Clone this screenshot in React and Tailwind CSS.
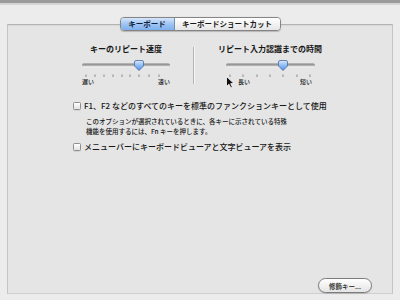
import React from "react";

function SliderGraphic({ ticks, thumbX, trackEnd }) {
  return (
    <svg width="110" height="22" viewBox="0 0 110 22" className="block">
      <defs>
        <linearGradient id="trk" x1="0" y1="0" x2="0" y2="1">
          <stop offset="0" stopColor="#7d7d7d" />
          <stop offset="1" stopColor="#c9c9c9" />
        </linearGradient>
        <linearGradient id="thm" x1="0" y1="0" x2="0" y2="1">
          <stop offset="0" stopColor="#d9e9fd" />
          <stop offset="0.5" stopColor="#8dbcf5" />
          <stop offset="1" stopColor="#4f8fe6" />
        </linearGradient>
      </defs>
      <rect x="11" y="7.5" width={trackEnd - 11} height="3" rx="1.5" fill="url(#trk)" />
      <line x1="12" y1="11" x2={trackEnd - 1} y2="11" stroke="#f4f4f4" strokeWidth="0.8" />
      {ticks.map((t) => (
        <rect key={t} x={t - 0.5} y="18.5" width="1" height="2.5" fill="#8a8a8a" />
      ))}
      <path
        d={`M${thumbX - 4.5},6 Q${thumbX - 4.5},4.5 ${thumbX - 3},4.5 L${thumbX + 3},4.5 Q${thumbX + 4.5},4.5 ${thumbX + 4.5},6 L${thumbX + 4.5},10 L${thumbX},14.5 L${thumbX - 4.5},10 Z`}
        fill="url(#thm)"
        stroke="#4b6a9c"
        strokeWidth="0.8"
      />
    </svg>
  );
}

function Checkbox() {
  return (
    <div className="w-[8px] h-[8px] shrink-0 rounded-[1.5px] border border-[#8e8e8e] bg-gradient-to-b from-[#ffffff] to-[#e2e2e2] shadow-[0_0.5px_0.5px_rgba(0,0,0,0.15)]" />
  );
}

export default function App() {
  const leftTicks = [15, 24, 33, 42, 51, 59, 68, 78, 88];
  const rightTicks = [15, 28, 42, 55, 68, 82, 95];
  return (
    <div className="w-[400px] h-[300px] bg-[#ececec] flex flex-col overflow-hidden relative font-['Noto_Sans_CJK_JP',sans-serif] text-[#161616]">
      <div className="h-[3px] bg-[#9b9b9b] shrink-0" />
      <div className="h-[2px] bg-[#d4d4d4] shrink-0" />
      <div className="mt-[19px] ml-[7px] w-[386px] h-[270px] shrink-0 box-border border border-t-[#b3b3b3] border-l-[#c4c4c4] border-r-[#c4c4c4] border-b-[#cfcfcf] bg-[#e5e5e5] flex flex-col shadow-[inset_0_1px_1px_rgba(0,0,0,0.06)]">
        {/* tabs */}
        <div className="-mt-[8px] self-center flex h-[14px] w-[161px] rounded-[4px] border border-[#858585] overflow-hidden shadow-[0_0.5px_1px_rgba(0,0,0,0.2)] text-[7.5px] font-bold leading-[12px]">
          <div className="w-[54px] flex items-center justify-center bg-gradient-to-b from-[#d6e6fb] via-[#9fc4f3] to-[#7fb0ee] border-r border-[#6f8fb8] text-[#0f1f3a]">
            キーボード
          </div>
          <div className="flex-1 flex items-center justify-center bg-gradient-to-b from-[#ffffff] to-[#e6e6e6] text-[#1a1a1a]">
            キーボードショートカット
          </div>
        </div>

        {/* sliders */}
        <div className="mt-[13px] flex items-start">
          <div className="ml-[63px] w-[110px] flex flex-col">
            <div className="text-center text-[8px] leading-[10px] font-bold">キーのリピート速度</div>
            <div className="mt-[2px]">
              <SliderGraphic ticks={leftTicks} thumbX={68} trackEnd={99} />
            </div>
            <div className="flex justify-between px-[11px] text-[6px] leading-[7px] font-medium">
              <span>遅い</span>
              <span>速い</span>
            </div>
          </div>
          <div className="ml-[12px] mt-[3px] h-[37px] w-[2px] flex">
            <div className="w-[1px] bg-[#b4b4b4]" />
            <div className="w-[1px] bg-[#f7f7f7]" />
          </div>
          <div className="ml-[20px] w-[110px] flex flex-col">
            <div className="text-center text-[8px] leading-[10px] font-bold whitespace-nowrap">リピート入力認識までの時間</div>
            <div className="mt-[2px]">
              <SliderGraphic ticks={rightTicks} thumbX={68} trackEnd={100} />
            </div>
            <div className="flex justify-between pl-[23px] pr-[13px] text-[6px] leading-[7px] font-medium">
              <span>長い</span>
              <span>短い</span>
            </div>
          </div>
        </div>

        {/* checkboxes */}
        <div className="mt-[16px] ml-[65px] flex items-center gap-[3px]">
          <Checkbox />
          <span className="text-[8px] leading-[10px] font-medium whitespace-nowrap">
            F1、F2 などのすべてのキーを標準のファンクションキーとして使用
          </span>
        </div>
        <div className="mt-[5px] ml-[78px] text-[6.5px] leading-[10px] font-medium whitespace-nowrap">
          <div>このオプションが選択されているときに、各キーに示されている特殊</div>
          <div>機能を使用するには、Fn キーを押します。</div>
        </div>
        <div className="mt-[6px] ml-[65px] flex items-center gap-[3px]">
          <Checkbox />
          <span className="text-[8px] leading-[10px] font-medium whitespace-nowrap">
            メニューバーにキーボードビューアと文字ビューアを表示
          </span>
        </div>

        {/* button */}
        <div className="mt-auto self-end mr-[20px] w-[54px] h-[15px] rounded-full border border-[#7d7d7d] bg-gradient-to-b from-[#ffffff] to-[#e4e4e4] flex items-center justify-center text-[6.5px] leading-[8px] font-medium shadow-[0_0.5px_1px_rgba(0,0,0,0.25)]">
          修飾キー...
        </div>
      </div>

      {/* mouse cursor */}
      <svg className="absolute left-[226px] top-[76px]" width="10" height="13" viewBox="0 0 10 13">
        <path d="M0.5,0.5 L0.5,10.5 L3,8.2 L4.8,12 L6.4,11.3 L4.7,7.6 L8,7.6 Z" fill="#111" stroke="#fff" strokeWidth="0.8" />
      </svg>
    </div>
  );
}
